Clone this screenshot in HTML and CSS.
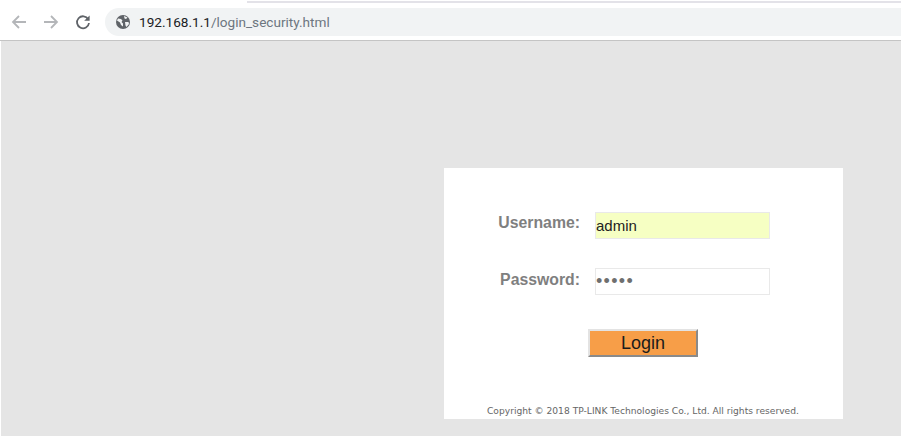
FILE: index.html
```html
<!DOCTYPE html>
<html lang="en">
<head>
  <meta charset="UTF-8">
  <meta name="viewport" content="width=device-width, initial-scale=1.0">
  <title>Login</title>
  <link rel="stylesheet" href="styles.css">
</head>
<body>
  <!-- Browser toolbar -->
  <header class="toolbar">
    <div class="tab-strip"></div>
    <div class="toolbar-row">
      <svg class="nav-icon back" width="16" height="16" viewBox="0 0 16 16"><path d="M15 8H2M8 2L2 8l6 6"/></svg>
      <svg class="nav-icon forward" width="16" height="16" viewBox="0 0 16 16"><path d="M1 8h13M8 2l6 6-6 6"/></svg>
      <svg class="nav-icon reload" width="16" height="16" viewBox="0 0 16 16"><path d="M13.2 5.2A6 6 0 1 0 14 9"/><path class="fill" d="M14.6 1.400v5.400H9.200z"/></svg>
      <div class="omnibox">
        <svg class="globe" width="14" height="14" viewBox="0 0 14 14"><circle cx="7" cy="7" r="7" fill="#5f6368"/><path d="M2 3.500l3 .5 1.500 1.500-1 1.500 1.500 1.500v3L5 10 4 7.500 1 5.500zM8 1l3.500 1.500L10 4 8.500 3.500zM9 7h3.500l.5 2-2.500 3-1-1.500z" fill="#f1f3f4"/></svg>
        <span class="url"><span class="host">192.168.1.1</span>/login_security.html</span>
      </div>
    </div>
  </header>

  <!-- Router login page -->
  <main class="page">
    <section class="login-panel">
      <form class="login-form">
        <div class="field username-row">
          <label for="username">Username:</label>
          <input id="username" class="autofilled" type="text" value="admin">
        </div>
        <div class="field password-row">
          <label for="password">Password:</label>
          <input id="password" type="password" value="admin">
        </div>
        <button class="login-button" type="button">Login</button>
      </form>
      <p class="copyright">Copyright © 2018 TP-LINK Technologies Co., Ltd. All rights reserved.</p>
    </section>
  </main>
</body>
</html>
```

FILE: styles.css
```css
/* Global */
* {
  margin: 0;
  padding: 0;
  box-sizing: border-box;
}

html, body {
  height: 437px;
  overflow: hidden;
}

body {
  background: #fff;
  font-family: "Liberation Sans", Arial, sans-serif;
}

/* Browser toolbar */
.toolbar {
  height: 41px;
  border-bottom: 1px solid #c4c4c4;
  background: #fff;
}

.tab-strip {
  height: 3px;
  margin-left: 247px;
  border-top: 1px solid #fff;
  background: #e3e2e8;
}

.toolbar-row {
  display: flex;
  align-items: center;
  height: 28px;
  margin-top: 5px;
  padding-left: 11px;
}

.nav-icon {
  fill: none;
  stroke-width: 1.8;
}

.nav-icon path.fill {
  fill: #5f6368;
  stroke: none;
}

.back, .forward {
  stroke: #b4b6b9;
}

.forward {
  margin-left: 16px;
}

.reload {
  margin-left: 16px;
  stroke: #5f6368;
}

.omnibox {
  flex: 1;
  display: flex;
  align-items: center;
  height: 28px;
  margin-left: 14px;
  padding-left: 11px;
  border-radius: 14px 0 0 14px;
  background: #f1f3f4;
}

.url {
  margin-left: 9px;
  font-family: Roboto, "Liberation Sans", sans-serif;
  font-size: 13.6px;
  color: #6d7680;
}

.host {
  color: #202124;
}

/* Page */
.page {
  height: 395px;
  margin-left: 1px;
  padding: 127px 0 0 443px;
  background: #e5e5e5;
}

.login-panel {
  display: flex;
  flex-direction: column;
  width: 399px;
  height: 251px;
  background: #fff;
}

.login-form {
  flex: 1;
  padding-top: 44px;
}

.field {
  display: flex;
  align-items: center;
  height: 27px;
  margin-bottom: 29px;
}

.field label {
  width: 136px;
  padding-bottom: 3px;
  text-align: right;
  font-size: 15.800px;
  font-weight: bold;
  color: #7f7f7f;
}

.username-row label {
  padding-bottom: 5px;
}

.field input {
  width: 175px;
  height: 27px;
  margin-left: 15px;
  padding: 0;
  border: 1px solid #e9e9e9;
  outline: none;
  font-family: "Liberation Sans", Arial, sans-serif;
  font-size: 15px;
  color: #222;
  background: #fff;
}

.field input.autofilled {
  background: #f6ffc3;
}

#password {
  font-size: 18px;
  letter-spacing: 1.300px;
  color: #6f6f6f;
}

.login-button {
  display: block;
  width: 110px;
  height: 28px;
  margin: 34px 0 0 144px;
  border: 2px solid;
  border-color: #e3e3e3 #8a8a8a #8a8a8a #e3e3e3;
  background: #f79e48;
  font-family: "Liberation Sans", Arial, sans-serif;
  font-size: 18px;
  color: #1b1b1b;
}

.copyright {
  padding: 0 0 2px 43px;
  font-family: "DejaVu Sans", sans-serif;
  font-size: 9.150px;
  line-height: 11px;
  color: #666;
}
```
